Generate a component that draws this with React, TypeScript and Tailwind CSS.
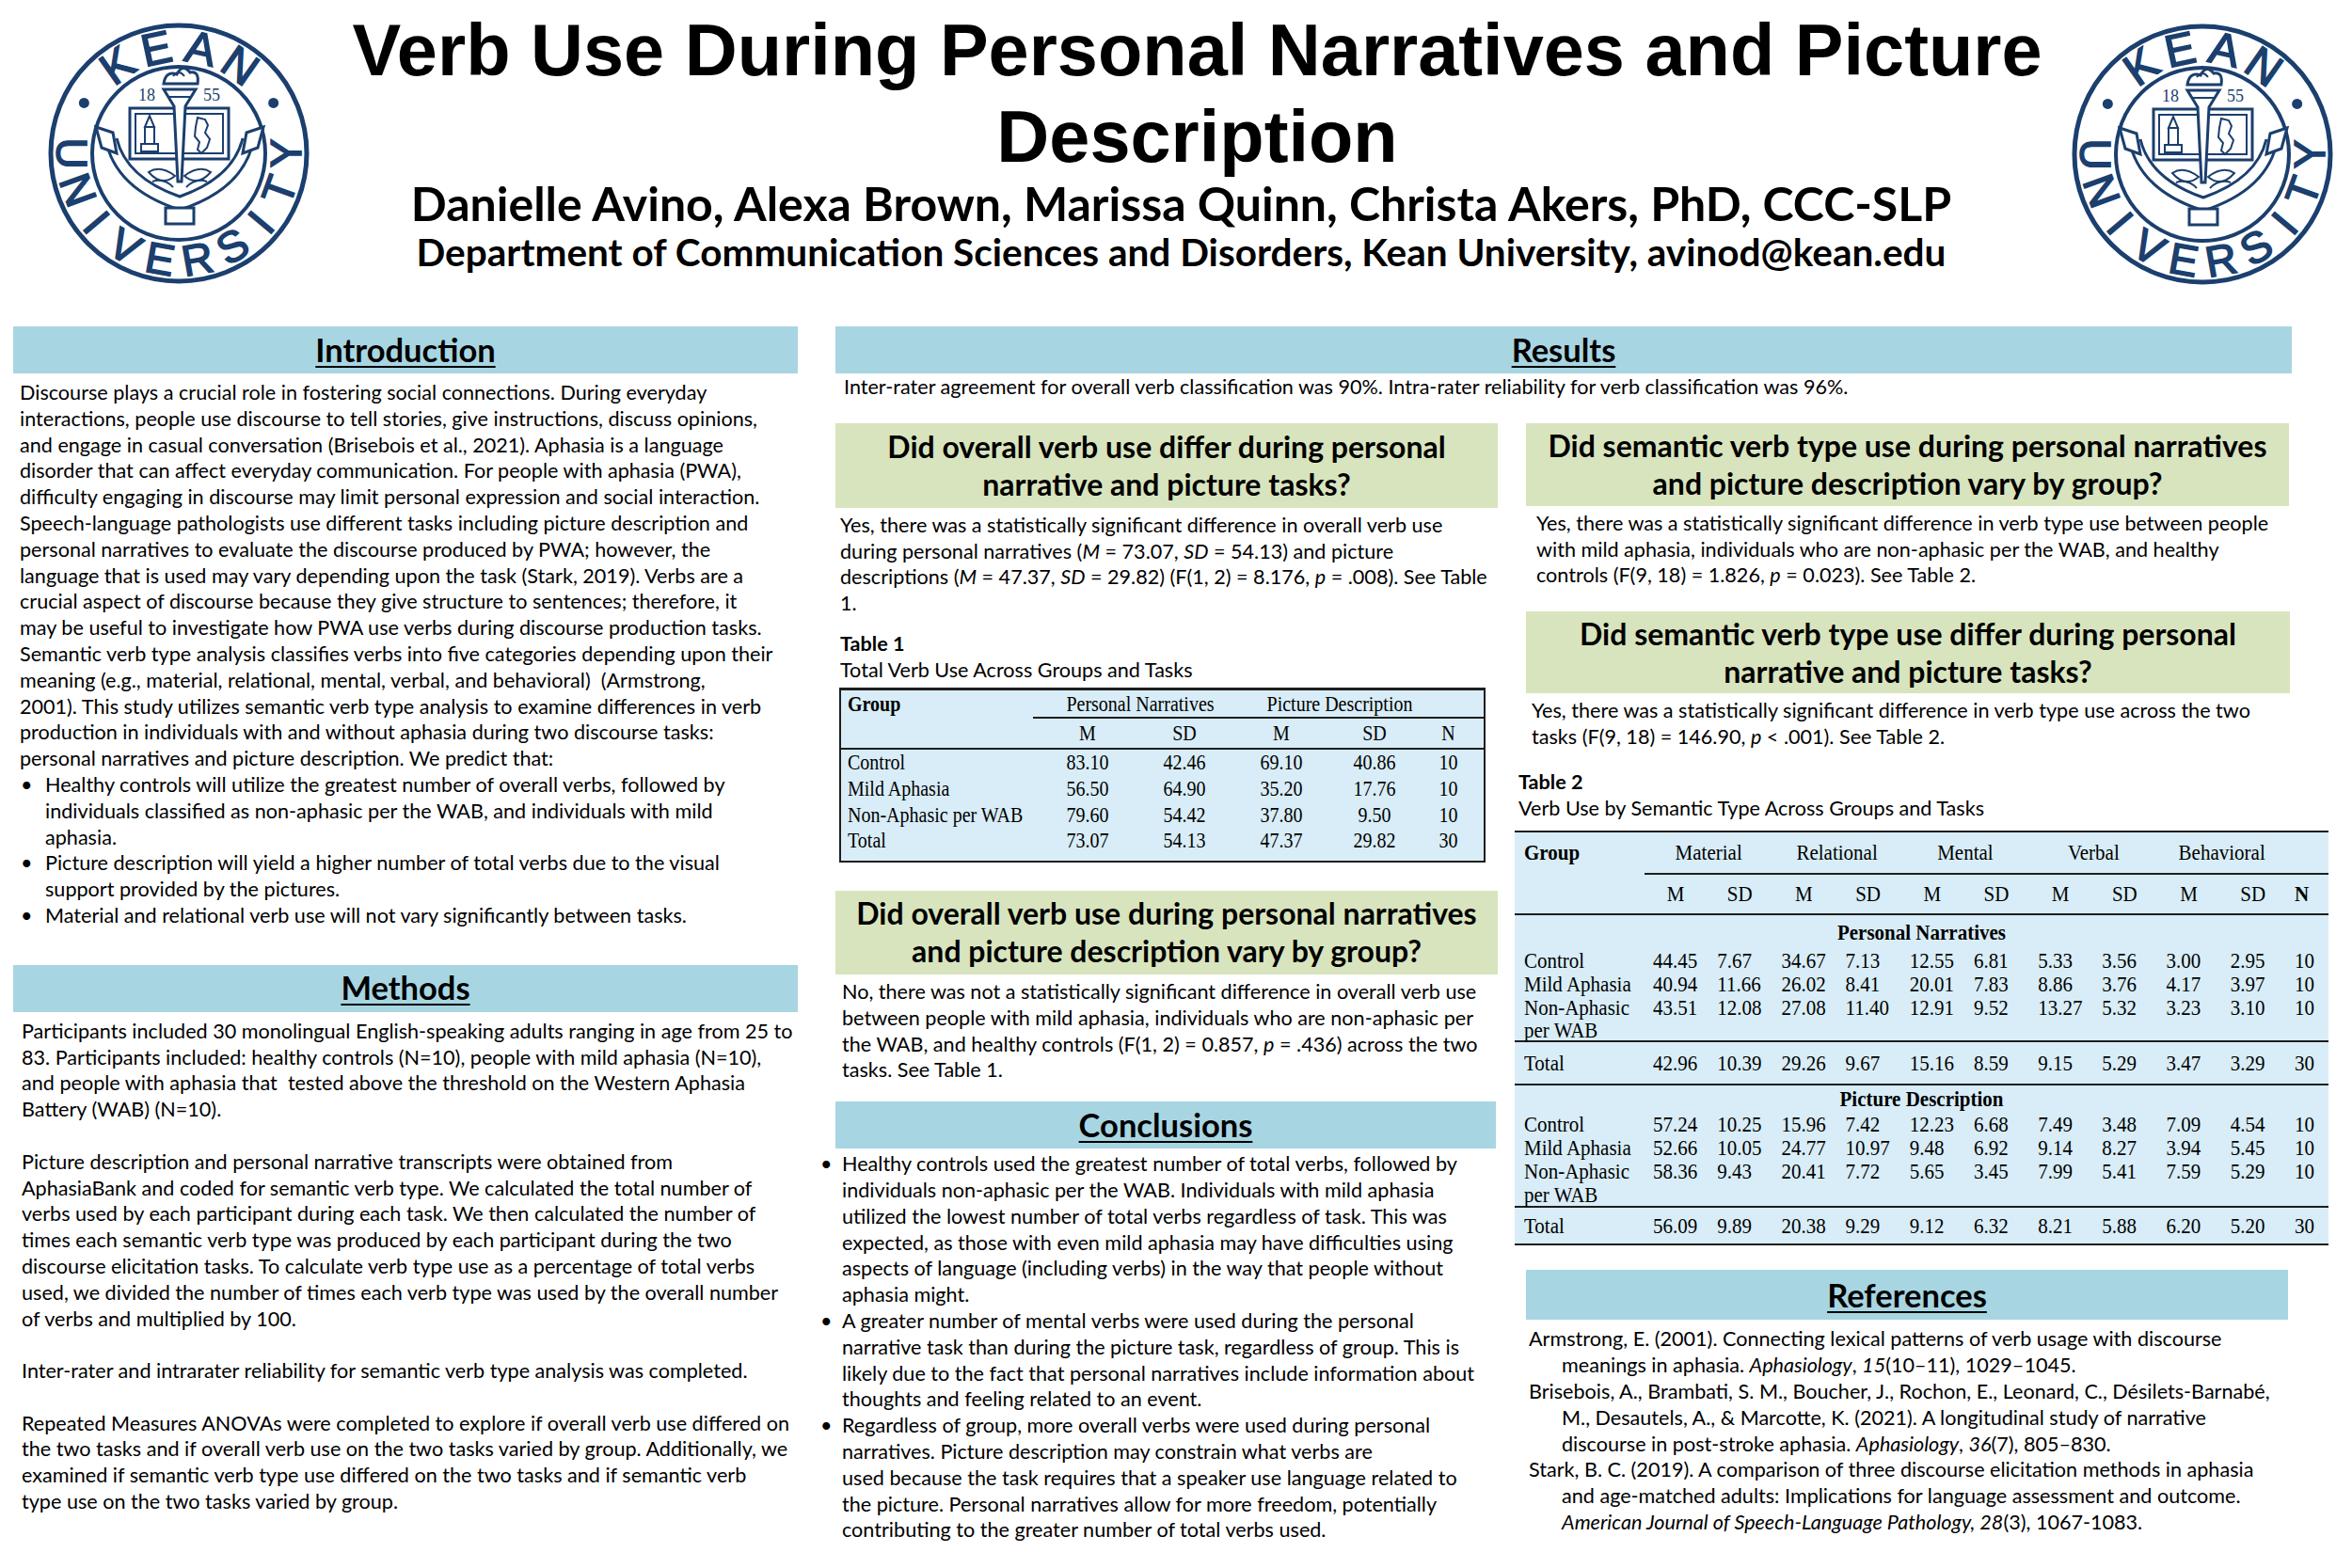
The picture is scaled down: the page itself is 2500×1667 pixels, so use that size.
import React from 'react';

const NAVY = '#1b3f6e';

function Logo() {
  const cx = 140;
  const cy = 140;
  const place = (a: number, r: number): [number, number] => {
    const rad = (a * Math.PI) / 180;
    return [cx + r * Math.sin(rad), cy - r * Math.cos(rad)];
  };
  const top: [string, number][] = [
    ['K', -35],
    ['E', -12],
    ['A', 12],
    ['N', 35],
  ];
  const bottom = 'UNIVERSITY'.split('');
  const dotL = place(-62, 114);
  const dotR = place(62, 114);
  return (
    <svg width={280} height={280} viewBox="0 0 280 280">
      <circle cx={cx} cy={cy} r={136} fill="none" stroke={NAVY} strokeWidth={5} />
      <circle cx={cx} cy={cy} r={92} fill="none" stroke={NAVY} strokeWidth={4} />
      {top.map(([ch, a]) => {
        const [x, y] = place(a, 114);
        return (
          <text
            key={ch}
            x={x}
            y={y}
            transform={`rotate(${a} ${x} ${y})`}
            textAnchor="middle"
            dominantBaseline="central"
            fontSize={48}
            fill={NAVY}
            stroke={NAVY}
            strokeWidth={1.6}
            fontFamily="'Liberation Sans', sans-serif"
          >
            {ch}
          </text>
        );
      })}
      {bottom.map((ch, i) => {
        const a = 270 - i * 20;
        const [x, y] = place(a, 114);
        return (
          <text
            key={i}
            x={x}
            y={y}
            transform={`rotate(${a - 180} ${x} ${y})`}
            textAnchor="middle"
            dominantBaseline="central"
            fontSize={46}
            fill={NAVY}
            stroke={NAVY}
            strokeWidth={1.6}
            fontFamily="'Liberation Sans', sans-serif"
          >
            {ch}
          </text>
        );
      })}
      <circle cx={dotL[0]} cy={dotL[1]} r={5.5} fill={NAVY} />
      <circle cx={dotR[0]} cy={dotR[1]} r={5.5} fill={NAVY} />
      {/* ribbon */}
      <path d="M62 124 Q72 178 141 200 Q210 178 220 124" fill="none" stroke={NAVY} strokeWidth={3} />
      <path d="M74 124 Q84 166 141 186 Q198 166 208 124" fill="none" stroke={NAVY} strokeWidth={3} />
      <polygon points="52,112 70,118 74,140 58,134" fill="white" stroke={NAVY} strokeWidth={3} />
      <polygon points="230,112 212,118 208,140 224,134" fill="white" stroke={NAVY} strokeWidth={3} />
      {/* frame */}
      <rect x={88} y={92} width={105} height={54} fill="white" stroke={NAVY} strokeWidth={3} />
      <rect x={94} y={98} width={93} height={42} fill="none" stroke={NAVY} strokeWidth={2} />
      {/* building */}
      <path d="M104 112 L109 100 L114 112 Z" fill="none" stroke={NAVY} strokeWidth={2} />
      <rect x={104} y={112} width={10} height={18} fill="none" stroke={NAVY} strokeWidth={2} />
      <rect x={100} y={130} width={18} height={8} fill="none" stroke={NAVY} strokeWidth={2} />
      {/* NJ */}
      <path d="M160 102 L168 104 L171 110 L168 118 L173 125 L170 134 L164 140 L160 136 L162 128 L157 122 L158 112 Z" fill="none" stroke={NAVY} strokeWidth={2} />
      {/* laurels */}
      <path d="M108 160 Q120 152 136 164 Q122 176 108 160 Z" fill="none" stroke={NAVY} strokeWidth={2} />
      <path d="M112 170 Q124 166 134 176" fill="none" stroke={NAVY} strokeWidth={2} />
      <path d="M174 160 Q162 152 146 164 Q160 176 174 160 Z" fill="none" stroke={NAVY} strokeWidth={2} />
      <path d="M170 170 Q158 166 148 176" fill="none" stroke={NAVY} strokeWidth={2} />
      {/* base */}
      <rect x={126} y={198} width={30} height={17} fill="white" stroke={NAVY} strokeWidth={3} />
      {/* torch */}
      <polygon points="124,72 158,72 147,90 143,170 139,170 135,90" fill="white" stroke={NAVY} strokeWidth={3} />
      <line x1={128} y1={80} x2={154} y2={80} stroke={NAVY} strokeWidth={2} />
      <path d="M124 66 Q126 52 138 56 Q144 44 152 54 Q162 52 160 66 Z" fill="white" stroke={NAVY} strokeWidth={3} />
      <path d="M134 58 Q140 50 146 58" fill="none" stroke={NAVY} strokeWidth={2} />
      <text x={106} y={84} textAnchor="middle" fontSize={18} fill={NAVY} fontFamily="'Liberation Serif', serif">18</text>
      <text x={175} y={84} textAnchor="middle" fontSize={18} fill={NAVY} fontFamily="'Liberation Serif', serif">55</text>
    </svg>
  );
}

function Lines({ lines }: { lines: React.ReactNode[] }) {
  return (
    <>
      {lines.map((l, i) => (
        <div key={i} className="whitespace-nowrap">
          {l === '' ? '\u00a0' : l}
        </div>
      ))}
    </>
  );
}

function Bullet({ lines, w }: { lines: React.ReactNode[]; w: string }) {
  return (
    <div className="flex">
      <div className={w}>•</div>
      <div>
        <Lines lines={lines} />
      </div>
    </div>
  );
}

const BAR = 'bg-[#a8d5e2] flex items-center justify-center';
const BAR_TXT = 'text-[34.5px] leading-none font-bold underline decoration-2 underline-offset-[4px]';
const GREEN = 'bg-[#d8e4bd] flex flex-col items-center justify-center text-center font-bold text-[32px] leading-[40px] whitespace-nowrap';
const BODY = 'text-[21.6px] leading-[27.8px]';
const T1 = 'grid grid-cols-[204px_116px_90px_116px_82px_75px] items-center';
const T2 = 'grid grid-cols-[147px_repeat(10,68.2px)_36px] items-center';

const t1rows: string[][] = [
  ['Control', '83.10', '42.46', '69.10', '40.86', '10'],
  ['Mild Aphasia', '56.50', '64.90', '35.20', '17.76', '10'],
  ['Non-Aphasic per WAB', '79.60', '54.42', '37.80', '9.50', '10'],
  ['Total', '73.07', '54.13', '47.37', '29.82', '30'],
];

const pn: string[][] = [
  ['Control', '44.45', '7.67', '34.67', '7.13', '12.55', '6.81', '5.33', '3.56', '3.00', '2.95', '10'],
  ['Mild Aphasia', '40.94', '11.66', '26.02', '8.41', '20.01', '7.83', '8.86', '3.76', '4.17', '3.97', '10'],
  ['Non-Aphasic', '43.51', '12.08', '27.08', '11.40', '12.91', '9.52', '13.27', '5.32', '3.23', '3.10', '10'],
];
const pnTotal = ['Total', '42.96', '10.39', '29.26', '9.67', '15.16', '8.59', '9.15', '5.29', '3.47', '3.29', '30'];
const pd: string[][] = [
  ['Control', '57.24', '10.25', '15.96', '7.42', '12.23', '6.68', '7.49', '3.48', '7.09', '4.54', '10'],
  ['Mild Aphasia', '52.66', '10.05', '24.77', '10.97', '9.48', '6.92', '9.14', '8.27', '3.94', '5.45', '10'],
  ['Non-Aphasic', '58.36', '9.43', '20.41', '7.72', '5.65', '3.45', '7.99', '5.41', '7.59', '5.29', '10'],
];
const pdTotal = ['Total', '56.09', '9.89', '20.38', '9.29', '9.12', '6.32', '8.21', '5.88', '6.20', '5.20', '30'];

function T2Row({ row, h }: { row: string[]; h: string }) {
  return (
    <div className={`${T2} ${h}`}>
      {row.map((c, i) => (
        <div key={i} className={i === 0 ? 'pl-[10px] whitespace-nowrap scale-y-[1.08]' : 'whitespace-nowrap scale-y-[1.08]'}>
          {c}
        </div>
      ))}
    </div>
  );
}

function Table1() {
  return (
    <div className="w-[687px] ml-[4px] mt-[4px] bg-[#d8edf7] border-2 border-t-[3px] border-[#1e1e1e] font-['Liberation_Serif',serif] text-[20px] leading-none">
      <div className={`${T1} h-[28px]`}>
        <div className="pl-[7px] font-bold scale-y-[1.2]">Group</div>
        <div className="col-span-2 text-center pl-[22px] scale-y-[1.2]">Personal Narratives</div>
        <div className="col-span-2 text-center pl-[42px] scale-y-[1.2]">Picture Description</div>
        <div />
      </div>
      <div className="ml-[204px] h-[2px] bg-[#1e1e1e]" />
      <div className={`${T1} h-[31px] text-center`}>
        <div />
        <div className="scale-y-[1.2]">M</div>
        <div className="scale-y-[1.2]">SD</div>
        <div className="scale-y-[1.2]">M</div>
        <div className="scale-y-[1.2]">SD</div>
        <div className="scale-y-[1.2]">N</div>
      </div>
      <div className="h-[2px] bg-[#1e1e1e]" />
      {t1rows.map((r) => (
        <div key={r[0]} className={`${T1} h-[27.6px]`}>
          {r.map((c, i) => (
            <div key={i} className={i === 0 ? 'pl-[7px] whitespace-nowrap scale-y-[1.2]' : 'text-center scale-y-[1.2]'}>
              {c}
            </div>
          ))}
        </div>
      ))}
      <div className="h-[8px]" />
    </div>
  );
}

function Table2() {
  const groups = ['Material', 'Relational', 'Mental', 'Verbal', 'Behavioral'];
  return (
    <div className="w-[865px] -ml-[12px] mt-[10px] bg-[#d8edf7] font-['Liberation_Serif',serif] text-[21px] leading-none">
      <div className="h-[2px] bg-[#1e1e1e]" />
      <div className={`${T2} h-[43px]`}>
        <div className="pl-[10px] font-bold scale-y-[1.08]">Group</div>
        {groups.map((g) => (
          <div key={g} className="col-span-2 text-center pr-[18px] scale-y-[1.08]">
            {g}
          </div>
        ))}
        <div />
      </div>
      <div className="ml-[138px] h-[2px] bg-[#1e1e1e]" />
      <div className={`${T2} h-[41px]`}>
        <div />
        {['M', 'SD', 'M', 'SD', 'M', 'SD', 'M', 'SD', 'M', 'SD'].map((m, i) => (
          <div key={i}>
            <span className="block w-[48px] text-center scale-y-[1.08]">{m}</span>
          </div>
        ))}
        <div className="font-bold scale-y-[1.08]">N</div>
      </div>
      <div className="h-[2px] bg-[#1e1e1e]" />
      <div className="h-[36px] flex items-center justify-center font-bold">
        <span className="scale-y-[1.08]">Personal Narratives</span>
      </div>
      {pn.map((r) => (
        <T2Row key={r[0]} row={r} h="h-[25px]" />
      ))}
      <div className="h-[22px] pl-[10px] flex items-center">
        <span className="scale-y-[1.08]">per WAB</span>
      </div>
      <div className="h-[2px] bg-[#1e1e1e]" />
      <T2Row row={pnTotal} h="h-[44px]" />
      <div className="h-[2px] bg-[#1e1e1e]" />
      <div className="h-[29px] flex items-center justify-center font-bold">
        <span className="scale-y-[1.08]">Picture Description</span>
      </div>
      {pd.map((r) => (
        <T2Row key={r[0]} row={r} h="h-[25px]" />
      ))}
      <div className="h-[24px] pl-[10px] flex items-center">
        <span className="scale-y-[1.08]">per WAB</span>
      </div>
      <div className="h-[2px] bg-[#1e1e1e]" />
      <T2Row row={pdTotal} h="h-[38px]" />
      <div className="h-[2px] bg-[#1e1e1e]" />
    </div>
  );
}

export default function App() {
  return (
    <div className="w-[2500px] h-[1667px] bg-white overflow-hidden text-black font-['Lato',sans-serif]">
      {/* Header */}
      <div className="flex h-[347px]">
        <div className="pl-[50px] pt-[23px]">
          <Logo />
        </div>
        <div className="flex-1 flex flex-col items-center pt-[7px]">
          <h1 className="font-['Liberation_Sans',Arial,sans-serif] font-bold text-[77.5px] leading-[92px] text-center pl-[14px] whitespace-nowrap">
            Verb Use During Personal Narratives and Picture
            <br />
            Description
          </h1>
          <div className="font-bold text-[50px] leading-[50px] pr-[20px] whitespace-nowrap">
            Danielle Avino, Alexa Brown, Marissa Quinn, Christa Akers, PhD, CCC-SLP
          </div>
          <div className="font-bold text-[40.5px] leading-[42px] mt-[6px] pr-[20px] whitespace-nowrap">
            Department of Communication Sciences and Disorders, Kean University, avinod@kean.edu
          </div>
        </div>
        <div className="pr-[19px] pt-[24px]">
          <Logo />
        </div>
      </div>

      {/* Body */}
      <div className="flex items-start">
        {/* Left column */}
        <div className="ml-[14px] w-[834px]">
          <div className={`${BAR} h-[50px]`}>
            <span className={BAR_TXT}>Introduction</span>
          </div>
          <div className={`${BODY} mt-[7px] pl-[7px]`}>
            <Lines
              lines={[
                'Discourse plays a crucial role in fostering social connections. During everyday',
                'interactions, people use discourse to tell stories, give instructions, discuss opinions,',
                'and engage in casual conversation (Brisebois et al., 2021). Aphasia is a language',
                'disorder that can affect everyday communication. For people with aphasia (PWA),',
                'difficulty engaging in discourse may limit personal expression and social interaction.',
                'Speech-language pathologists use different tasks including picture description and',
                'personal narratives to evaluate the discourse produced by PWA; however, the',
                'language that is used may vary depending upon the task (Stark, 2019). Verbs are a',
                'crucial aspect of discourse because they give structure to sentences; therefore, it',
                'may be useful to investigate how PWA use verbs during discourse production tasks.',
                'Semantic verb type analysis classifies verbs into five categories depending upon their',
                'meaning (e.g., material, relational, mental, verbal, and behavioral)\u00a0 (Armstrong,',
                '2001). This study utilizes semantic verb type analysis to examine differences in verb',
                'production in individuals with and without aphasia during two discourse tasks:',
                'personal narratives and picture description. We predict that:',
              ]}
            />
            <Bullet
              w="w-[27px] pl-[1px]"
              lines={[
                'Healthy controls will utilize the greatest number of overall verbs, followed by',
                'individuals classified as non-aphasic per the WAB, and individuals with mild',
                'aphasia.',
              ]}
            />
            <Bullet
              w="w-[27px] pl-[1px]"
              lines={['Picture description will yield a higher number of total verbs due to the visual', 'support provided by the pictures.']}
            />
            <Bullet w="w-[27px] pl-[1px]" lines={['Material and relational verb use will not vary significantly between tasks.']} />
          </div>

          <div className={`${BAR} h-[50px] mt-[38px]`}>
            <span className={BAR_TXT}>Methods</span>
          </div>
          <div className={`${BODY} mt-[7px] pl-[9px]`}>
            <Lines
              lines={[
                'Participants included 30 monolingual English-speaking adults ranging in age from 25 to',
                '83. Participants included: healthy controls (N=10), people with mild aphasia (N=10),',
                'and people with aphasia that\u00a0 tested above the threshold on the Western Aphasia',
                'Battery (WAB) (N=10).',
                '',
                'Picture description and personal narrative transcripts were obtained from',
                'AphasiaBank and coded for semantic verb type. We calculated the total number of',
                'verbs used by each participant during each task. We then calculated the number of',
                'times each semantic verb type was produced by each participant during the two',
                'discourse elicitation tasks. To calculate verb type use as a percentage of total verbs',
                'used, we divided the number of times each verb type was used by the overall number',
                'of verbs and multiplied by 100.',
                '',
                'Inter-rater and intrarater reliability for semantic verb type analysis was completed.',
                '',
                'Repeated Measures ANOVAs were completed to explore if overall verb use differed on',
                'the two tasks and if overall verb use on the two tasks varied by group. Additionally, we',
                'examined if semantic verb type use differed on the two tasks and if semantic verb',
                'type use on the two tasks varied by group.',
              ]}
            />
          </div>
        </div>

        {/* Results area */}
        <div className="ml-[40px] w-[1548px]">
          <div className={`${BAR} h-[50px]`}>
            <span className={BAR_TXT}>Results</span>
          </div>
          <div className={`${BODY} mt-[1px] pl-[9px] whitespace-nowrap`}>
            Inter-rater agreement for overall verb classification was 90%. Intra-rater reliability for verb classification was 96%.
          </div>

          <div className="flex items-start mt-[24px]">
            {/* Middle column */}
            <div className="w-[704px]">
              <div className={`${GREEN} h-[90px]`}>
                <div>Did overall verb use differ during personal</div>
                <div>narrative and picture tasks?</div>
              </div>
              <div className={`${BODY} mt-[5px] pl-[5px]`}>
                <Lines
                  lines={[
                    'Yes, there was a statistically significant difference in overall verb use',
                    <>
                      during personal narratives (<i>M</i> = 73.07, <i>SD</i> = 54.13) and picture
                    </>,
                    <>
                      descriptions (<i>M</i> = 47.37, <i>SD</i> = 29.82) (F(1, 2) = 8.176, <i>p</i> = .008). See Table
                    </>,
                    '1.',
                  ]}
                />
              </div>
              <div className={`${BODY} mt-[15px] pl-[5px]`}>
                <div className="font-bold">Table 1</div>
                <div>Total Verb Use Across Groups and Tasks</div>
              </div>
              <Table1 />

              <div className={`${GREEN} h-[89px] mt-[30px]`}>
                <div>Did overall verb use during personal narratives</div>
                <div>and picture description vary by group?</div>
              </div>
              <div className={`${BODY} mt-[5px] pl-[7px]`}>
                <Lines
                  lines={[
                    'No, there was not a statistically significant difference in overall verb use',
                    'between people with mild aphasia, individuals who are non-aphasic per',
                    <>
                      the WAB, and healthy controls (F(1, 2) = 0.857, <i>p</i> = .436) across the two
                    </>,
                    'tasks. See Table 1.',
                  ]}
                />
              </div>

              <div className={`${BAR} h-[50px] mt-[19px] mr-[2px]`}>
                <span className={BAR_TXT}>Conclusions</span>
              </div>
              <div className={`${BODY} mt-[3px] -ml-[16px]`}>
                <Bullet
                  w="w-[23px]"
                  lines={[
                    'Healthy controls used the greatest number of total verbs, followed by',
                    'individuals non-aphasic per the WAB. Individuals with mild aphasia',
                    'utilized the lowest number of total verbs regardless of task. This was',
                    'expected, as those with even mild aphasia may have difficulties using',
                    'aspects of language (including verbs) in the way that people without',
                    'aphasia might.',
                  ]}
                />
                <Bullet
                  w="w-[23px]"
                  lines={[
                    'A greater number of mental verbs were used during the personal',
                    'narrative task than during the picture task, regardless of group. This is',
                    'likely due to the fact that personal narratives include information about',
                    'thoughts and feeling related to an event.',
                  ]}
                />
                <Bullet
                  w="w-[23px]"
                  lines={[
                    'Regardless of group, more overall verbs were used during personal',
                    'narratives. Picture description may constrain what verbs are',
                    'used because the task requires that a speaker use language related to',
                    'the picture. Personal narratives allow for more freedom, potentially',
                    'contributing to the greater number of total verbs used.',
                  ]}
                />
              </div>
            </div>

            {/* Right column */}
            <div className="ml-[30px] w-[814px]">
              <div className={`${GREEN} h-[88px] mr-[3px]`}>
                <div>Did semantic verb type use during personal narratives</div>
                <div>and picture description vary by group?</div>
              </div>
              <div className={`${BODY} mt-[5px] pl-[11px]`}>
                <Lines
                  lines={[
                    'Yes, there was a statistically significant difference in verb type use between people',
                    'with mild aphasia, individuals who are non-aphasic per the WAB, and healthy',
                    <>
                      controls (F(9, 18) = 1.826, <i>p</i> = 0.023). See Table 2.
                    </>,
                  ]}
                />
              </div>
              <div className={`${GREEN} h-[87px] mt-[24px] mr-[2px]`}>
                <div>Did semantic verb type use differ during personal</div>
                <div>narrative and picture tasks?</div>
              </div>
              <div className={`${BODY} mt-[5px] pl-[6px]`}>
                <Lines
                  lines={[
                    'Yes, there was a statistically significant difference in verb type use across the two',
                    <>
                      tasks (F(9, 18) = 146.90, <i>p</i> &lt; .001). See Table 2.
                    </>,
                  ]}
                />
              </div>
              <div className={`${BODY} mt-[20px] -ml-[8px]`}>
                <div className="font-bold">Table 2</div>
                <div>Verb Use by Semantic Type Across Groups and Tasks</div>
              </div>
              <Table2 />

              <div className={`${BAR} h-[53px] mt-[26px] mr-[4px]`}>
                <span className={BAR_TXT}>References</span>
              </div>
              <div className={`${BODY} mt-[7px] pl-[3px]`}>
                <div className="whitespace-nowrap">Armstrong, E. (2001). Connecting lexical patterns of verb usage with discourse</div>
                <div className="whitespace-nowrap pl-[35px]">
                  meanings in aphasia. <i>Aphasiology</i>, <i>15</i>(10–11), 1029–1045.
                </div>
                <div className="whitespace-nowrap">
                  Brisebois, A., Brambati, S. M., Boucher, J., Rochon, E., Leonard, C., Désilets-Barnabé,
                </div>
                <div className="whitespace-nowrap pl-[35px]">M., Desautels, A., &amp; Marcotte, K. (2021). A longitudinal study of narrative</div>
                <div className="whitespace-nowrap pl-[35px]">
                  discourse in post-stroke aphasia. <i>Aphasiology</i>, <i>36</i>(7), 805–830.
                </div>
                <div className="whitespace-nowrap">Stark, B. C. (2019). A comparison of three discourse elicitation methods in aphasia</div>
                <div className="whitespace-nowrap pl-[35px]">and age-matched adults: Implications for language assessment and outcome.</div>
                <div className="whitespace-nowrap pl-[35px]">
                  <i>American Journal of Speech-Language Pathology, 28</i>(3), 1067-1083.
                </div>
              </div>
            </div>
          </div>
        </div>
      </div>
    </div>
  );
}
